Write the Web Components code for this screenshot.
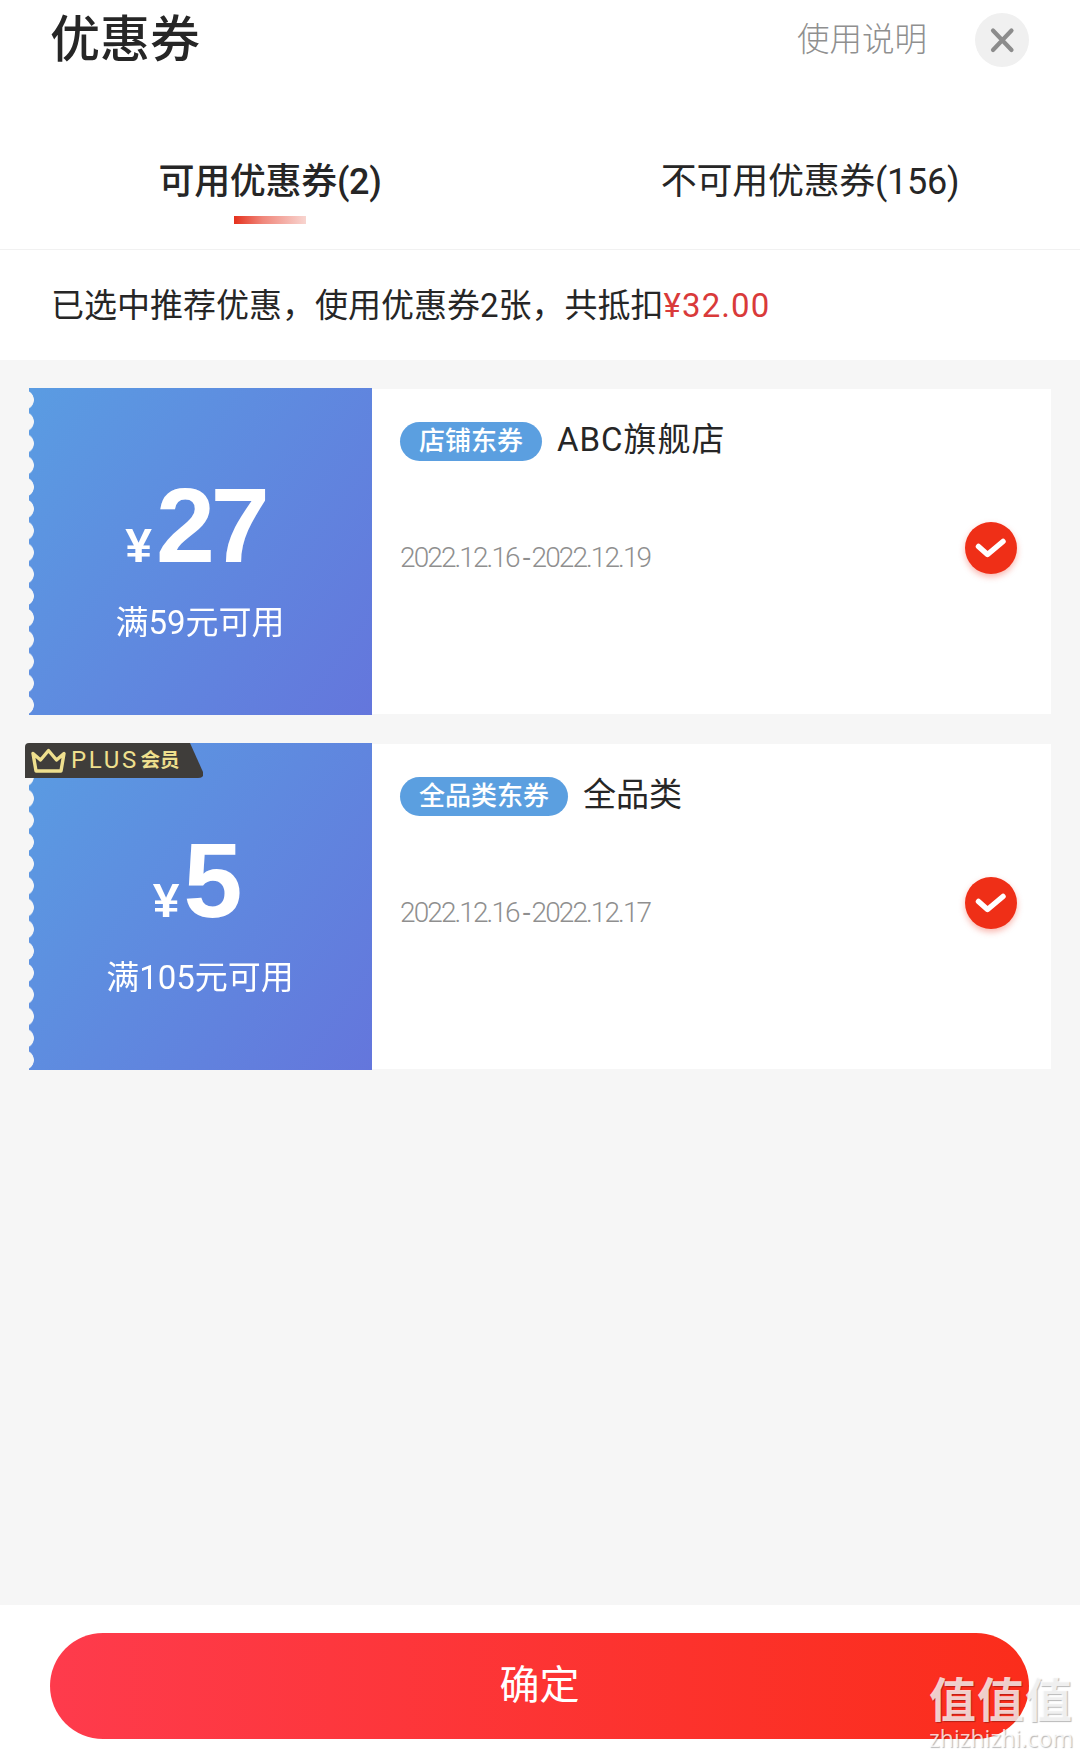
<!DOCTYPE html>
<html lang="zh">
<head>
<meta charset="utf-8">
<title>优惠券</title>
<style>
html,body{margin:0;padding:0;background:#fff}
body{font-family:Roboto,"Noto Sans CJK SC",sans-serif;color:#262626}
</style>
</head>
<body>
<coupon-sheet>
  <sheet-header slot="top">优惠券<span slot="help">使用说明</span></sheet-header>
  <sheet-tabs slot="top"><span slot="first">可用优惠券(2)</span><span slot="second">不可用优惠券(156)</span></sheet-tabs>
  <sheet-notice slot="top">已选中推荐优惠，使用优惠券2张，共抵扣<span slot="amount">¥32.00</span></sheet-notice>
  <coupon-card style="--scope-track:1px" value="27" rule="满59元可用" tag="店铺东券" scope="ABC旗舰店" from="2022.12.16" to="2022.12.19"></coupon-card>
  <coupon-card value="5" rule="满105元可用" tag="全品类东券" scope="全品类" from="2022.12.16" to="2022.12.17" plus></coupon-card>
  <confirm-bar slot="bottom">确定</confirm-bar>
  <brand-watermark slot="bottom"></brand-watermark>
</coupon-sheet>
<script>
function def(name, css, html){
  customElements.define(name, class extends HTMLElement{
    constructor(){
      super();
      const r=this.attachShadow({mode:'open'});
      r.innerHTML='<style>'+css+'</style>'+(typeof html==='function'?html(this):html);
    }
  });
}
const CJK='Roboto,"Noto Sans CJK SC",sans-serif';

def('coupon-sheet',`
  :host{display:flex;flex-direction:column;width:1080px;height:1756px;position:relative;overflow:hidden;background:#fff;font-family:${CJK}}
  main{flex:1;display:flex;flex-direction:column;gap:28px;padding:28px 29px 0 29px;background:#f6f6f6}
  footer{position:relative}
`,`<slot name="top"></slot><main><slot></slot></main><footer><slot name="bottom"></slot></footer>`);

def('sheet-header',`
  :host{display:flex;align-items:center;height:80px;padding:0 51px 0 50px;box-sizing:border-box}
  h1{flex:1;margin:0;font-size:50px;font-weight:500;line-height:78px;color:#262626}
  .help{font-size:32.5px;color:#8f8f8f;font-weight:300;margin-right:48px;line-height:80px}
  .close{width:54px;height:54px;border-radius:50%;background:#f0f0f0;display:flex;align-items:center;justify-content:center;flex:none}
  svg{display:block}
`,`<h1><slot></slot></h1><div class="help"><slot name="help"></slot></div>
<div class="close"><svg width="26" height="26" viewBox="0 0 26 26"><path d="M4 3.5L22.5 23M22.5 3.5L4 23" stroke="#8c8c8c" stroke-width="4.2" stroke-linecap="round" fill="none"/></svg></div>`);

def('sheet-tabs',`
  :host{display:grid;grid-template-columns:1fr 1fr;height:170px;box-sizing:border-box;border-bottom:1px solid #f1f1f1}
  div{display:flex;flex-direction:column;align-items:center;padding-top:78px;font-size:36px;line-height:48px;color:#262626;letter-spacing:-.3px}
  .on{font-weight:500}
  i{display:block;width:72px;height:8px;margin-top:10px;background:linear-gradient(90deg,#e5301c 0,#f0877b 40%,#f8d5d0 100%)}
`,`<div class="on"><span><slot name="first"></slot></span><i></i></div><div><span><slot name="second"></slot></span></div>`);

def('sheet-notice',`
  :host{display:flex;align-items:center;height:110px;padding:0 0 4px 51px;box-sizing:border-box;font-size:33px;color:#262626;background:#fff;white-space:nowrap;font-weight:400}
  .a{color:#d93a3a;letter-spacing:1.1px}
`,`<span><slot></slot><span class="a"><slot name="amount"></slot></span></span>`);

def('coupon-card',`
  :host{display:flex;height:327px;position:relative;font-family:${CJK}}
  .left{width:343px;flex:none;color:#fff;display:flex;flex-direction:column;align-items:center;position:relative;padding-top:77px;box-sizing:border-box;padding-right:6px;
    background:linear-gradient(125deg,#5a9ce2 0%,#6476dc 100%);
    -webkit-mask:radial-gradient(circle at -5px 50%,transparent 9.5px,#000 10.2px) 0 1px/100% 21.8px;
    mask:radial-gradient(circle at -5px 50%,transparent 9.5px,#000 10.2px) 0 1px/100% 21.8px}
  .amt{display:flex;align-items:baseline;font-family:"Liberation Sans",sans-serif;font-weight:700;height:120px;line-height:120px}
  .cur{font-size:48px;margin-right:4px;line-height:120px}
  .val{font-size:106px;letter-spacing:-4px;line-height:120px;padding-right:4px}
  .rule{font-size:33px;line-height:44px;margin-top:16px;font-weight:400;padding-left:5px;white-space:nowrap}
  .right{flex:1;background:#fff;display:flex;align-items:center;padding:0 34px 8px 28px;box-sizing:border-box;height:325px;margin-top:1px}
  .info{flex:1;align-self:flex-start;padding-top:32px}
  .row{display:flex;align-items:center;height:40px}
  .tag{height:39px;line-height:38px;padding:0 19px;border-radius:20px;background:#5b9fe0;color:#fff;font-size:26px;font-weight:500;white-space:nowrap}
  .scope{margin-left:15px;font-size:33px;line-height:36px;color:#262626;white-space:nowrap;letter-spacing:var(--scope-track,0);position:relative;top:-1px}
  .dates{margin-top:77px;font-size:28px;line-height:40px;color:#8f8f8f;font-weight:300;letter-spacing:-1.9px;white-space:nowrap}
  .dates b{font-weight:400;margin:0 3px 0 4px}
  .check{width:52px;height:52px;flex:none;border-radius:50%;background:#ef2f17;box-shadow:0 3px 6px rgba(239,47,23,.35);display:flex;align-items:center;justify-content:center}
  .check svg{display:block}
  .plus{position:absolute;left:-4px;top:0;width:178px;height:35px;background:#3f3d3a;color:#efe08e;
    clip-path:path("M4 0H165L178 29Q180 35 173 35H0V4Q0 0 4 0Z");display:flex;align-items:center;padding-left:6px;box-sizing:border-box;white-space:nowrap}
  .plus svg{flex:none;display:block}
  .p{font-family:Roboto,sans-serif;font-size:24px;letter-spacing:2.7px;margin-left:5px;line-height:35px;font-weight:400}
  .v{font-size:19.5px;font-weight:700;margin-left:1.5px;line-height:35px}
`, el=>`
<div class="left">
  <div class="amt"><span class="cur">¥</span><span class="val">${el.getAttribute('value')}</span></div>
  <div class="rule">${el.getAttribute('rule')}</div>
</div>
<div class="right">
  <div class="info">
    <div class="row"><span class="tag">${el.getAttribute('tag')}</span><span class="scope">${el.getAttribute('scope')}</span></div>
    <div class="dates">${el.getAttribute('from')}<b>-</b>${el.getAttribute('to')}</div>
  </div>
  <div class="check"><svg width="32" height="24" viewBox="0 0 32 24"><path d="M3.5 10.5L12.5 18.5L28 5.5" stroke="#fff" stroke-width="5.5" stroke-linecap="round" stroke-linejoin="round" fill="none"/></svg></div>
</div>
${el.hasAttribute('plus')?`<div class="plus"><svg width="35" height="26" viewBox="0 0 35 26"><path d="M2 5.5L9.5 12L17.5 2.5L25.5 12L33 5.5L30 23H5Z" fill="none" stroke="#efe08e" stroke-width="3.4" stroke-linejoin="round"/></svg><span class="p">PLUS</span><span class="v">会员</span></div>`:''}
`);

def('confirm-bar',`
  :host{display:block;height:151px;padding:28px 51px 0 50px;box-sizing:border-box;background:#fff}
  .btn{display:flex;align-items:center;justify-content:center;height:106px;border-radius:53px;color:#fff;font:400 40px/50px ${CJK};
    background:linear-gradient(90deg,#fe3b4c 0%,#fb2d1b 100%)}
`,`<div class="btn"><span><slot></slot></span></div>`);

def('brand-watermark',`
  :host{position:absolute;left:929px;top:66px;width:148px;color:rgba(255,255,255,.78);pointer-events:none;display:block;font-family:"Noto Sans CJK SC",sans-serif;text-shadow:1px 1px 1px rgba(0,0,0,.28)}
  .z{font-size:47px;line-height:52px;height:52px;font-weight:700;letter-spacing:1px;white-space:nowrap}
  .c{font:400 23px/24px "Open Sans",sans-serif;margin-top:3px;letter-spacing:0;white-space:nowrap}
`,`<div class="z">值值值</div><div class="c">zhizhizhi.com</div>`);
</script>
</body>
</html>
